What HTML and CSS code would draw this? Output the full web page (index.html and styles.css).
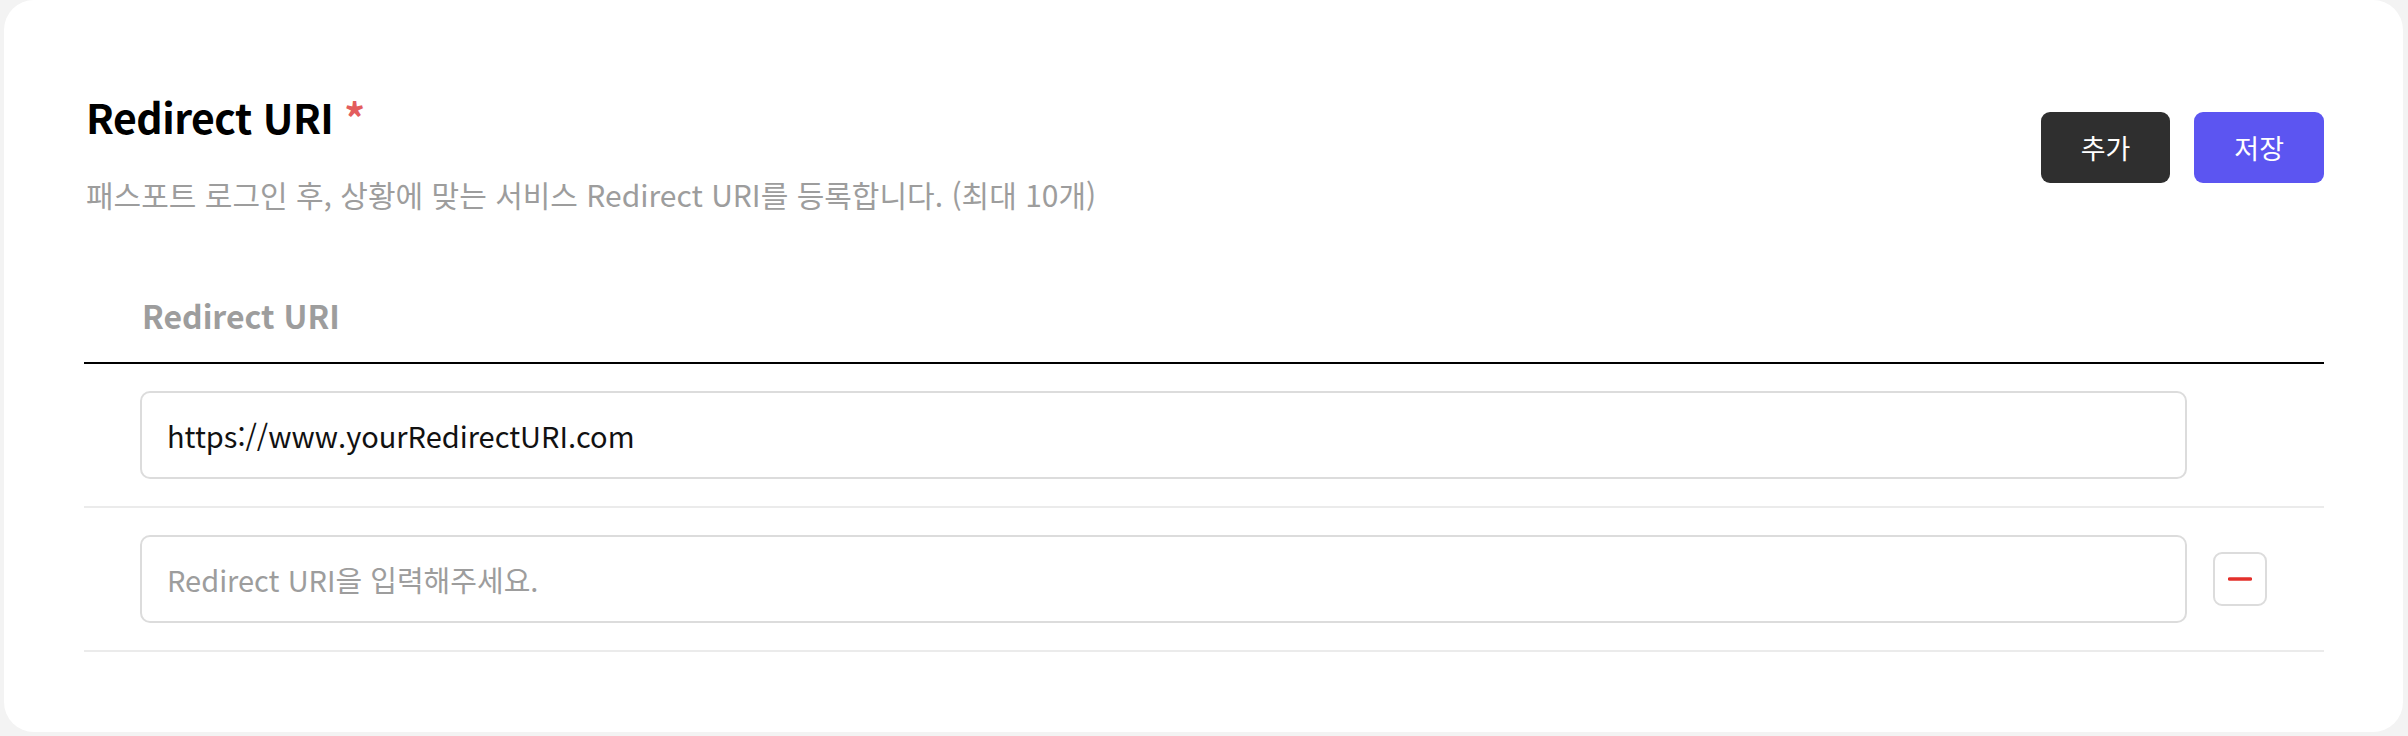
FILE: index.html
```html
<!DOCTYPE html>
<html lang="ko">
<head>
  <meta charset="UTF-8">
  <meta name="viewport" content="width=device-width, initial-scale=1.0">
  <title>Redirect URI 설정</title>
  <link rel="stylesheet" href="styles.css">
</head>
<body>

  <section class="card">
    <div class="card-head">
      <div class="card-title">
        <h2>Redirect URI <span class="required">*</span></h2>
        <p class="desc">패스포트 로그인 후, 상황에 맞는 서비스 Redirect URI를 등록합니다. (최대 10개)</p>
      </div>
      <div class="actions">
        <button type="button" class="btn btn-dark">추가</button>
        <button type="button" class="btn btn-primary">저장</button>
      </div>
    </div>

    <div class="uri-table">
      <div class="uri-head">Redirect URI</div>
      <div class="uri-row">
        <input type="text" class="uri-input" value="https://www.yourRedirectURI.com">
      </div>
      <div class="uri-row">
        <input type="text" class="uri-input" placeholder="Redirect URI을 입력해주세요.">
        <button type="button" class="btn-remove" aria-label="삭제">
          <svg width="24" height="4" viewBox="0 0 24 4"><line x1="1.5" y1="2" x2="22.5" y2="2" stroke="#e3302b" stroke-width="3.4" stroke-linecap="round"/></svg>
        </button>
      </div>
    </div>
  </section>

</body>
</html>
```

FILE: styles.css
```css
body {
  font-family: "Noto Sans CJK KR", "Noto Sans", sans-serif;
  background-color: #f3f3f3;
  margin: 0 5px 4px 4px;
}

.card {
  background: #fff;
  border-radius: 30px;
  height: 732px;
  box-sizing: border-box;
  padding: 87px 79px 80px 80px;
}

.card-head {
  display: flex;
  justify-content: space-between;
  align-items: flex-start;
}

.card-title h2 {
  margin: 0;
  font-size: 41px;
  line-height: 58px;
  font-weight: 700;
  letter-spacing: -0.5px;
  color: #000;
  padding-left: 2px;
}

.required {
  color: #e35d5d;
}

.desc {
  margin: 29px 0 0;
  padding-left: 2px;
  font-size: 30px;
  line-height: 40px;
  color: #9d9d9d;
}

.actions {
  display: flex;
  gap: 24px;
  margin-top: 25px;
}

.btn {
  height: 71px;
  padding: 0 40px;
  border: none;
  border-radius: 9px;
  font-family: inherit;
  font-size: 27px;
  color: #fff;
  cursor: pointer;
}

.btn-dark {
  background-color: #2f2f2f;
}

.btn-primary {
  background-color: #5c55f1;
}

.uri-table {
  margin-top: 81px;
}

.uri-head {
  padding: 0 58px 27px;
  font-size: 32px;
  line-height: 40px;
  font-weight: 700;
  color: #9d9d9d;
  border-bottom: 2px solid #000;
}

.uri-row {
  display: grid;
  grid-template-columns: 1fr 54px;
  align-items: center;
  column-gap: 26px;
  padding: 27px 57px 27px 56px;
  border-bottom: 2px solid #ebebeb;
}

.uri-input {
  height: 88px;
  box-sizing: border-box;
  padding: 0 25px;
  border: 2px solid #dcdcdc;
  border-radius: 10px;
  font-family: inherit;
  font-size: 29px;
  color: #111;
  outline: none;
}

.uri-input::placeholder {
  color: #9d9d9d;
}

.btn-remove {
  width: 54px;
  height: 54px;
  padding: 0;
  border: 2px solid #dcdcdc;
  border-radius: 9px;
  background: #fff;
  display: flex;
  justify-content: center;
  align-items: center;
  cursor: pointer;
}
```
